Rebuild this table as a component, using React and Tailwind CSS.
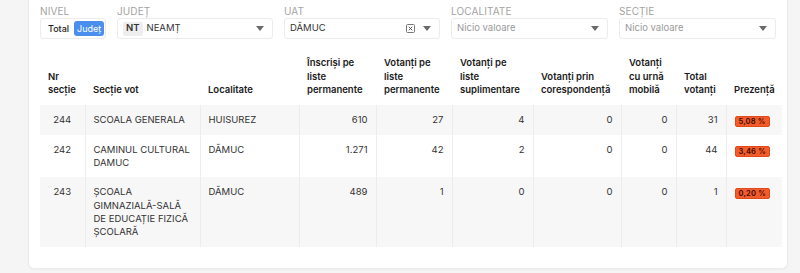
import React from "react";

const Caret = () => (
  <svg width="8" height="5" viewBox="0 0 8 5" className="shrink-0">
    <path d="M0 0 L8 0 L4 5 Z" fill="#6b6b6b" />
  </svg>
);

const ClearIcon = () => (
  <svg width="9" height="9" viewBox="0 0 9 9" className="shrink-0">
    <rect x="0.5" y="0.5" width="8" height="8" rx="1" fill="none" stroke="#777" strokeWidth="1" />
    <path d="M2.8 2.8 L6.2 6.2 M6.2 2.8 L2.8 6.2" stroke="#555" strokeWidth="1" />
  </svg>
);

function Field({ label, children, width }) {
  return (
    <div className={`flex flex-col ${width}`}>
      <div className="text-[10px] leading-[12px] text-[#a3a3a3] uppercase tracking-[0.1px] mb-[1px]">{label}</div>
      {children}
    </div>
  );
}

function Select({ children, clear }) {
  return (
    <div className="h-[21px] border border-[#ececec] rounded-[3px] bg-white flex items-center pl-[5px] pr-[8px] text-[9.5px]">
      <div className="flex-1 flex items-center min-w-0">{children}</div>
      {clear && <div className="mr-[8px] flex items-center"><ClearIcon /></div>}
      <Caret />
    </div>
  );
}

const cols = [
  { w: "w-[45px]", h: ["Nr", "secție"] },
  { w: "w-[115px]", h: ["Secție vot"] },
  { w: "w-[99px]", h: ["Localitate"] },
  { w: "w-[77px]", h: ["Înscriși pe", "liste", "permanente"] },
  { w: "w-[76px]", h: ["Votanți pe", "liste", "permanente"] },
  { w: "w-[81px]", h: ["Votanți pe", "liste", "suplimentare"] },
  { w: "w-[88px]", h: ["Votanți prin", "corespondență"] },
  { w: "w-[55px]", h: ["Votanți", "cu urnă", "mobilă"] },
  { w: "w-[50px]", h: ["Total", "votanți"] },
  { w: "w-[56px]", h: ["Prezență"] },
];

const rows = [
  ["244", ["SCOALA GENERALA"], "HUISUREZ", "610", "27", "4", "0", "0", "31", "5,08 %"],
  ["242", ["CAMINUL CULTURAL", "DAMUC"], "DĂMUC", "1.271", "42", "2", "0", "0", "44", "3,46 %"],
  ["243", ["ȘCOALA", "GIMNAZIALĂ-SALĂ", "DE EDUCAȚIE FIZICĂ", "ȘCOLARĂ"], "DĂMUC", "489", "1", "0", "0", "0", "1", "0,20 %"],
];

export default function App() {
  return (
    <div
      className="w-[800px] h-[273px] bg-[#f5f5f5] overflow-hidden text-[#222]"
      style={{ fontFamily: "Inter, 'Noto Sans', sans-serif" }}
    >
      <div className="ml-[28px] w-[760px] h-[269px] bg-white border border-t-0 border-[#ececec] rounded-b-[6px] shadow-[0_1px_2px_rgba(0,0,0,0.04)] px-[11px] pt-[5px]">
        <div className="flex gap-[11px] items-end">
          <Field label="Nivel" width="w-[66px]">
            <div className="h-[21px] border border-[#ececec] rounded-[3px] flex items-center pl-[7px] pr-[2px] gap-[5px] text-[9px]">
              <span className="font-medium text-[#222]">Total</span>
              <span className="bg-[#4a8ff0] text-white rounded-[3px] px-[3px] h-[15px] flex items-center">Județ</span>
            </div>
          </Field>
          <Field label="Județ" width="w-[158px]">
            <Select>
              <span className="bg-[#eeeeee] text-[#333] font-semibold rounded-[2px] px-[3px] h-[14px] flex items-center mr-[4px]">NT</span>
              <span className="text-[#333]">NEAMȚ</span>
            </Select>
          </Field>
          <Field label="UAT" width="w-[158px]">
            <Select clear>
              <span className="text-[#333]">DĂMUC</span>
            </Select>
          </Field>
          <Field label="Localitate" width="w-[159px]">
            <Select>
              <span className="text-[#9a9a9a]">Nicio valoare</span>
            </Select>
          </Field>
          <Field label="Secție" width="w-[159px]">
            <Select>
              <span className="text-[#9a9a9a]">Nicio valoare</span>
            </Select>
          </Field>
        </div>

        <table className="mt-[10px] border-collapse table-fixed w-[742px] text-[9.5px]">
          <colgroup>
            {cols.map((c, i) => (
              <col key={i} className={c.w} />
            ))}
          </colgroup>
          <thead>
            <tr>
              {cols.map((c, i) => (
                <th
                  key={i}
                  className="align-bottom text-left font-semibold text-[9.5px] leading-[13.5px] px-[8px] pt-[7px] pb-[8px] text-[#1a1a1a]"
                >
                  {c.h.map((l, j) => (
                    <div key={j} className="whitespace-nowrap">{l}</div>
                  ))}
                </th>
              ))}
            </tr>
          </thead>
          <tbody>
            {rows.map((r, i) => (
              <tr key={i} className={i % 2 === 0 ? "bg-[#f7f7f7]" : "bg-white"}>
                {r.map((v, j) => {
                  const border = j < 9 ? "border-r border-[#ececec]" : "";
                  if (j === 1) {
                    return (
                      <td key={j} className={`align-top px-[8px] py-[8px] leading-[13.3px] text-[#333] ${border}`}>
                        {v.map((l, k) => (
                          <div key={k} className="whitespace-nowrap">{l}</div>
                        ))}
                      </td>
                    );
                  }
                  if (j === 9) {
                    return (
                      <td key={j} className="align-top px-[8px] pt-[9px] pb-[8px] leading-[13.3px]">
                        <span className="inline-block bg-[#f25c2a] border border-[#e04a18] text-[#3a0800] font-semibold text-[7.5px] leading-[9px] px-[3px] rounded-[2px] tracking-[0.2px]">
                          {v}
                        </span>
                      </td>
                    );
                  }
                  const align = j === 0 ? "text-center" : j >= 3 ? "text-right" : "text-left";
                  return (
                    <td key={j} className={`align-top px-[8px] py-[8px] leading-[13.3px] text-[#333] ${align} ${border}`}>
                      {v}
                    </td>
                  );
                })}
              </tr>
            ))}
          </tbody>
        </table>
      </div>
    </div>
  );
}
